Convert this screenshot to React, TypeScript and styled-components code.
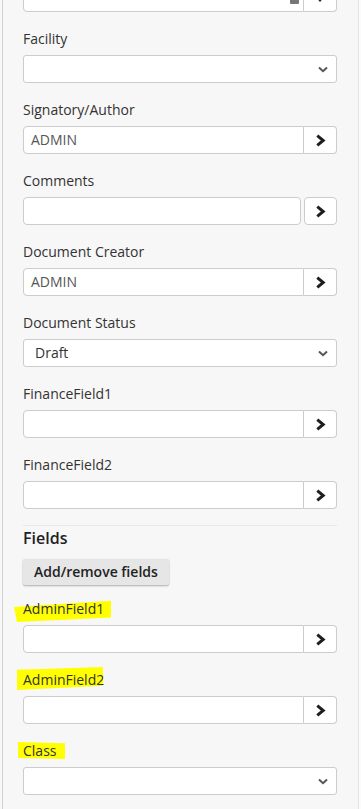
import React from 'react';
import styled, { createGlobalStyle } from 'styled-components';

const GlobalStyle = createGlobalStyle`
  html, body {
    margin: 0;
    padding: 0;
    background: #f7f7f7;
  }
  body {
    font-family: "Open Sans", "Noto Sans", sans-serif;
    font-size: 14px;
    color: #333;
    overflow: hidden;
  }
`;

const Page = styled.div`
  display: flex;
  width: 361px;
  height: 809px;
  overflow: hidden;
`;

const Panel = styled.div`
  margin-left: 2px;
  border-left: 1px solid #d2d2d2;
  width: 355px;
  flex: none;
  background: #f7f7f7;
  border-right: 1px solid #e4e4e4;
`;

const Content = styled.div`
  width: 314px;
  padding-left: 20px;
`;

const Track = styled.div`
  flex: 1;
  background: #fbfbfb;
`;

const Field = styled.div<{ $first?: boolean }>`
  margin-top: ${p => (p.$first ? '-16px' : '0')};
  margin-bottom: 17px;
`;

const Label = styled.div`
  position: relative;
  height: 20px;
  line-height: 20px;
  margin-bottom: 6px;
  color: #333;
  white-space: nowrap;
`;

const LabelText = styled.span`
  position: relative;
`;

const Highlight = styled.span`
  position: absolute;
  background: #ffff00;
`;

const Group = styled.div`
  display: flex;
  height: 28px;
`;

const TextBox = styled.div<{ $alone?: boolean }>`
  position: relative;
  flex: 1;
  box-sizing: border-box;
  height: 28px;
  background: #fff;
  border: 1px solid #ccc;
  border-radius: ${p => (p.$alone ? '4px' : '4px 0 0 4px')};
  padding: 0 7px;
  line-height: 26px;
  color: #555;
`;

const AddonButton = styled.div<{ $alone?: boolean }>`
  width: 33px;
  box-sizing: border-box;
  height: 28px;
  background: #fff;
  border: 1px solid #ccc;
  border-left: ${p => (p.$alone ? '1px solid #ccc' : 'none')};
  border-radius: ${p => (p.$alone ? '4px' : '0 4px 4px 0')};
  margin-left: ${p => (p.$alone ? '3px' : '0')};
  display: flex;
  align-items: center;
  justify-content: center;
  color: #222;
`;

const SelectBox = styled.div`
  position: relative;
  box-sizing: border-box;
  height: 28px;
  background: #fff;
  border: 1px solid #ccc;
  border-radius: 3px;
  padding: 0 11px;
  line-height: 26px;
  color: #333;
`;

const SelectArrow = styled.svg`
  position: absolute;
  right: 8px;
  top: 10px;
`;

const Rule = styled.div`
  height: 1px;
  background: #e8e8e8;
  margin-top: -1px;
`;

const Heading = styled.div`
  font-size: 16px;
  font-weight: 600;
  line-height: 22px;
  color: #222;
  margin-top: 1px;
`;

const Button = styled.button`
  display: block;
  margin: 10px 0 14px 0;
  height: 26px;
  padding: 0 11px;
  border: none;
  border-radius: 2px;
  background: #e6e6e6;
  box-shadow: 0 1px 2px rgba(0, 0, 0, 0.3);
  font-family: "Open Sans", "Noto Sans", sans-serif;
  font-size: 14px;
  font-weight: 600;
  color: #222;
  line-height: 26px;
`;

const TopIcon = styled.svg`
  position: absolute;
  right: 4px;
  bottom: 7px;
`;

const Chevron = () => (
  <svg width="11" height="13" viewBox="0 0 11 13">
    <path d="M2.3 1.6 L8.2 6.5 L2.3 11.4" fill="none" stroke="#1e1e1e" strokeWidth="3" strokeLinejoin="miter" />
  </svg>
);

const DownArrow = () => (
  <SelectArrow width="10" height="7" viewBox="0 0 10 7">
    <path d="M1 1.5 L5 5.2 L9 1.5" fill="none" stroke="#555" strokeWidth="2" />
  </SelectArrow>
);

type Mark = { left: number; top: number; width: number; height: number; clip: string };

const FieldLabel = ({ text, mark }: { text: string; mark?: Mark }) => (
  <Label>
    {mark && (
      <Highlight
        style={{ left: mark.left, top: mark.top, width: mark.width, height: mark.height, clipPath: mark.clip }}
      />
    )}
    <LabelText>{text}</LabelText>
  </Label>
);

const LookupField = ({ label, value, mark }: { label: string; value?: string; mark?: Mark }) => (
  <Field>
    <FieldLabel text={label} mark={mark} />
    <Group>
      <TextBox>{value}</TextBox>
      <AddonButton>
        <Chevron />
      </AddonButton>
    </Group>
  </Field>
);

const SelectField = ({ label, value, mark }: { label: string; value?: string; mark?: Mark }) => (
  <Field>
    <FieldLabel text={label} mark={mark} />
    <SelectBox>
      {value}
      <DownArrow />
    </SelectBox>
  </Field>
);

export default function App() {
  return (
    <Page>
      <GlobalStyle />
      <Panel>
        <Content>
          <Field $first>
            <Group>
              <TextBox>
                <TopIcon width="9" height="8" viewBox="0 0 9 8">
                  <rect x="0" y="1" width="9" height="7" rx="1" fill="#777" />
                  <rect x="2" y="0" width="5" height="2" fill="#777" />
                </TopIcon>
              </TextBox>
              <AddonButton>
                <svg width="8" height="28" viewBox="0 0 8 28">
                  <path d="M1 14.5 L7 14.5 L4 18 Z" fill="#222" />
                </svg>
              </AddonButton>
            </Group>
          </Field>

          <SelectField label="Facility" />
          <LookupField label="Signatory/Author" value="ADMIN" />

          <Field>
            <FieldLabel text="Comments" />
            <Group>
              <TextBox $alone />
              <AddonButton $alone>
                <Chevron />
              </AddonButton>
            </Group>
          </Field>

          <LookupField label="Document Creator" value="ADMIN" />
          <SelectField label="Document Status" value="Draft" />
          <LookupField label="FinanceField1" />
          <LookupField label="FinanceField2" />

          <Rule />
          <Heading>Fields</Heading>
          <Button>Add/remove fields</Button>

          <LookupField
            label="AdminField1"
            mark={{ left: -9, top: 0, width: 97, height: 23, clip: 'polygon(0 35%, 100% 8%, 100% 80%, 3% 100%)' }}
          />
          <LookupField
            label="AdminField2"
            mark={{ left: -6, top: -3, width: 86, height: 23, clip: 'polygon(0 12%, 100% 0, 100% 82%, 0 100%)' }}
          />
          <SelectField
            label="Class"
            mark={{ left: -5, top: 1, width: 47, height: 17, clip: 'polygon(0 0, 100% 8%, 100% 100%, 0 94%)' }}
          />
        </Content>
      </Panel>
      <Track />
    </Page>
  );
}
